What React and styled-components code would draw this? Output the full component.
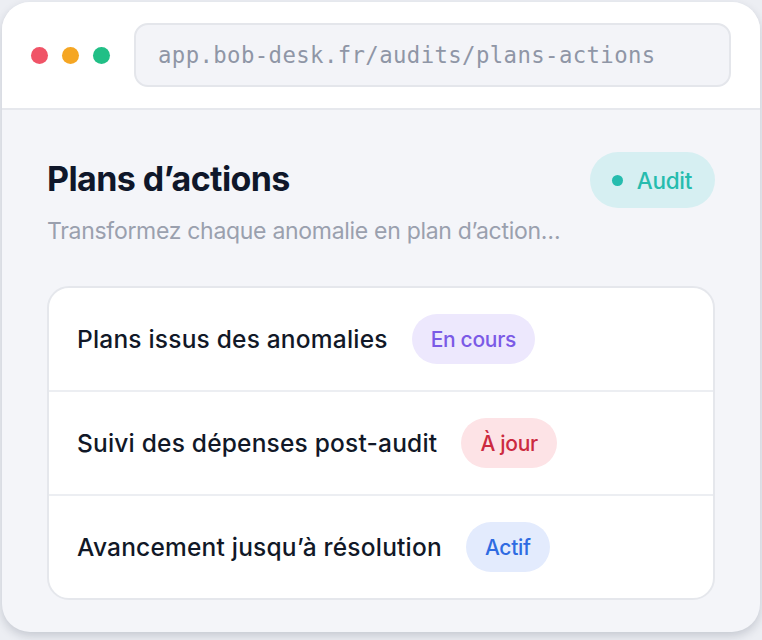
import styled, { createGlobalStyle } from "styled-components";

const GlobalStyle = createGlobalStyle`
  html, body {
    margin: 0;
    padding: 0;
    background: #eceef3;
    font-family: Inter, "Noto Sans", sans-serif;
  }
`;

const tones = {
  purple: { bg: "#ede8fd", fg: "#7b5ae6" },
  red: { bg: "#fde3e6", fg: "#cc2a40" },
  blue: { bg: "#e3ebfd", fg: "#2f6be2" },
  teal: { bg: "#d6eff2", fg: "#26bcae" },
};

const rows = [
  { label: "Plans issus des anomalies", status: "En cours", tone: "purple" },
  { label: "Suivi des dépenses post-audit", status: "À jour", tone: "red" },
  { label: "Avancement jusqu’à résolution", status: "Actif", tone: "blue" },
];

const Page = styled.div`
  height: 640px;
  padding: 2px 2px 8px 2px;
  box-sizing: border-box;
  display: flex;
`;

const Window = styled.div`
  flex: 1;
  display: flex;
  flex-direction: column;
  border-radius: 28px;
  overflow: hidden;
  background: #f4f5f9;
  box-shadow: 0 4px 10px rgba(30, 40, 60, 0.18);
`;

const TitleBar = styled.div`
  height: 106px;
  background: #fff;
  border-bottom: 2px solid #e6e8ed;
  display: flex;
  align-items: center;
  padding: 0 29px 0 29px;
  gap: 24px;
`;

const Dots = styled.div`
  display: flex;
  gap: 14px;
`;

const Dot = styled.span`
  width: 17px;
  height: 17px;
  border-radius: 50%;
  background: ${(p) => p.color};
`;

const UrlBar = styled.div`
  flex: 1;
  height: 60px;
  border-radius: 14px;
  background: #f3f4f8;
  border: 2px solid #e4e6eb;
  display: flex;
  align-items: center;
  padding: 0 22px;
  font-family: "DejaVu Sans Mono", "Liberation Mono", monospace;
  font-size: 22.3px;
  color: #8f96a6;
  letter-spacing: 0.4px;
`;

const Content = styled.div`
  flex: 1;
  padding: 42px 45px 0 45px;
  display: flex;
  flex-direction: column;
`;

const Header = styled.div`
  display: flex;
  justify-content: space-between;
  align-items: flex-start;
`;

const Title = styled.h1`
  margin: 6px 0 0;
  font-size: 34px;
  font-weight: 700;
  letter-spacing: -0.6px;
  color: #0f172a;
`;

const Pill = styled.span`
  display: inline-flex;
  align-items: center;
  gap: ${(p) => (p.big ? "14px" : "0")};
  height: ${(p) => (p.big ? "56px" : "50px")};
  padding: 0 ${(p) => (p.big ? "23px" : "19px")} 0 ${(p) => (p.big ? "22px" : "19px")};
  border-radius: 999px;
  background: ${(p) => tones[p.tone].bg};
  color: ${(p) => tones[p.tone].fg};
  font-size: ${(p) => (p.big ? "22.5px" : "21px")};
  font-weight: 500;
  letter-spacing: -0.3px;
`;

const PillDot = styled.span`
  width: 11px;
  height: 11px;
  border-radius: 50%;
  background: currentColor;
`;

const Subtitle = styled.p`
  margin: 9px 0 0;
  font-size: 23px;
  color: #9aa0ae;
  letter-spacing: -0.3px;
`;

const Card = styled.div`
  margin-top: 41px;
  background: #fff;
  border: 2px solid #e5e7ec;
  border-radius: 22px;
  display: flex;
  flex-direction: column;
`;

const Row = styled.div`
  height: 102px;
  display: flex;
  align-items: center;
  gap: 24px;
  padding: 0 28px;
  & + & {
    border-top: 2px solid #eceef2;
  }
`;

const RowLabel = styled.span`
  font-size: 24.5px;
  font-weight: 500;
  color: #111827;
  letter-spacing: 0.2px;
`;

export default function App() {
  return (
    <Page>
      <GlobalStyle />
      <Window>
        <TitleBar>
          <Dots>
            <Dot color="#f05467" />
            <Dot color="#f5a623" />
            <Dot color="#21bf86" />
          </Dots>
          <UrlBar>app.bob-desk.fr/audits/plans-actions</UrlBar>
        </TitleBar>
        <Content>
          <Header>
            <Title>Plans d’actions</Title>
            <Pill big tone="teal">
              <PillDot />
              Audit
            </Pill>
          </Header>
          <Subtitle>Transformez chaque anomalie en plan d’action…</Subtitle>
          <Card>
            {rows.map((r) => (
              <Row key={r.label}>
                <RowLabel>{r.label}</RowLabel>
                <Pill tone={r.tone}>{r.status}</Pill>
              </Row>
            ))}
          </Card>
        </Content>
      </Window>
    </Page>
  );
}
